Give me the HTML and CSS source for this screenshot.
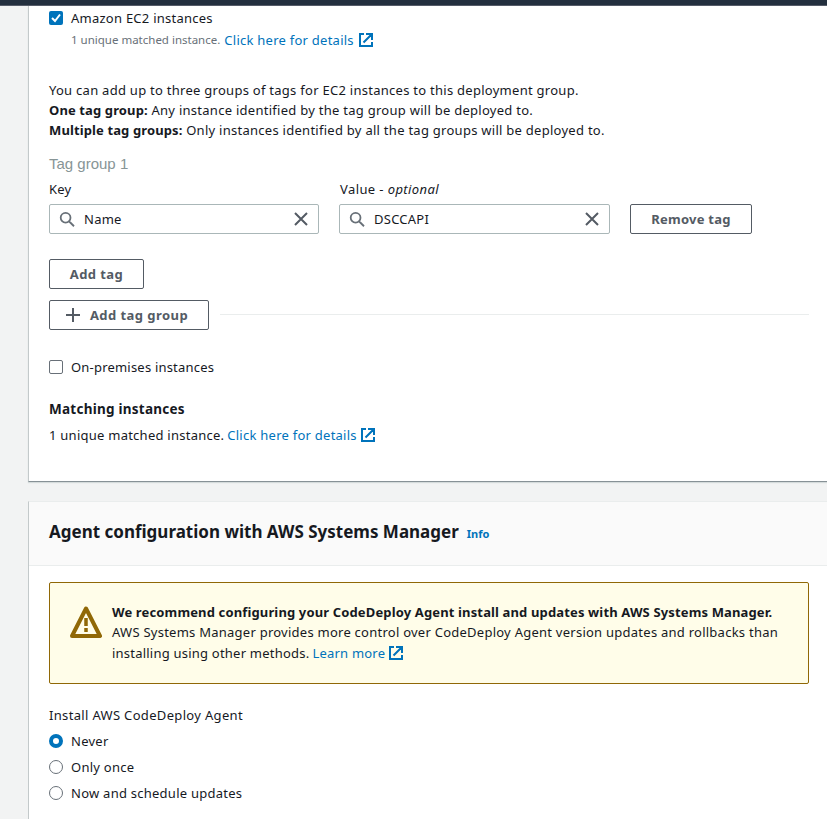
FILE: index.html
```html
<!DOCTYPE html>
<html lang="en">
<head>
<meta charset="utf-8">
<title>Edit deployment group</title>
<link rel="stylesheet" href="styles.css">
</head>
<body>
<svg class="sprite" aria-hidden="true">
  <symbol id="external" viewBox="0 0 16 16"><path d="M6 2H2v12h12v-4M8 2h6v6M14 2 5.500 10.500" fill="none" stroke="currentColor" stroke-width="2"/></symbol>
  <symbol id="search" viewBox="0 0 16 16"><path d="M11.500 6.750a4.900 4.900 0 1 1-9.800 0 4.900 4.900 0 0 1 9.800 0ZM10 10.250l5 5" fill="none" stroke="currentColor" stroke-width="1.800"/></symbol>
  <symbol id="close" viewBox="0 0 16 16"><path d="m2 2 12 12M14 2 2 14" fill="none" stroke="currentColor" stroke-width="2"/></symbol>
</svg>
<header class="topbar"></header>
<main class="page">
  <section class="panel environment">
    <div class="choice"><span class="checkbox checked"><svg viewBox="0 0 14 14"><path d="m3 7 3 3 5-6.500" fill="none" stroke="#fff" stroke-width="2"/></svg></span><span>Amazon EC2 instances</span></div>
    <div class="description"><small>1 unique matched instance.</small> <a>Click here for details</a><svg class="ext"><use href="#external"/></svg></div>
    <div class="intro">
      <p>You can add up to three groups of tags for EC2 instances to this deployment group.</p>
      <p><b>One tag group:</b> Any instance identified by the tag group will be deployed to.</p>
      <p><b>Multiple tag groups:</b> Only instances identified by all the tag groups will be deployed to.</p>
    </div>
    <div class="group-title">Tag group 1</div>
    <div class="fields">
      <div class="field key"><label>Key</label><div class="input"><svg class="glass"><use href="#search"/></svg><span>Name</span><svg class="clear"><use href="#close"/></svg></div></div>
      <div class="field value"><label>Value - <i>optional</i></label><div class="input"><svg class="glass"><use href="#search"/></svg><span>DSCCAPI</span><svg class="clear"><use href="#close"/></svg></div></div>
      <button class="button remove">Remove tag</button>
    </div>
    <button class="button add">Add tag</button>
    <div class="group-row">
      <button class="button add-group"><svg viewBox="0 0 14 14"><path d="M7 0v14M0 7h14" stroke="currentColor" stroke-width="2"/></svg>Add tag group</button>
      <span class="rule"></span>
    </div>
    <div class="choice onprem"><span class="checkbox"></span><span>On-premises instances</span></div>
    <h3>Matching instances</h3>
    <div class="matching"><span>1 unique matched instance.</span> <a>Click here for details</a><svg class="ext"><use href="#external"/></svg></div>
  </section>
  <section class="panel agent">
    <div class="panel-header"><h2>Agent configuration with AWS Systems Manager</h2><a class="info">Info</a></div>
    <div class="panel-body">
      <div class="alert">
        <svg class="warning" viewBox="0 0 32 32"><path d="M16 2.500 30 30H2Z" fill="none" stroke="currentColor" stroke-width="4" stroke-linejoin="round"/><path d="M16 12v8M16 22v4" stroke="currentColor" stroke-width="3.500"/></svg>
        <div class="alert-text">
          <p class="alert-title"><b>We recommend configuring your CodeDeploy Agent install and updates with AWS Systems Manager.</b></p>
          <p>AWS Systems Manager provides more control over CodeDeploy Agent version updates and rollbacks than</p>
          <p class="alert-last"><span>installing using other methods.</span> <a>Learn more</a><svg class="ext"><use href="#external"/></svg></p>
        </div>
      </div>
      <div class="install-label">Install AWS CodeDeploy Agent</div>
      <div class="choice"><span class="radio on"></span><span>Never</span></div>
      <div class="choice"><span class="radio"></span><span>Only once</span></div>
      <div class="choice"><span class="radio"></span><span>Now and schedule updates</span></div>
    </div>
  </section>
</main>
</body>
</html>
```
FILE: styles.css
```css
* { box-sizing: border-box; }
body { margin: 0; height: 819px; overflow: hidden; background: #f2f3f3; color: #16191f; font: 13px/20px "Noto Sans", sans-serif; letter-spacing: .25px; }
h2, h3, p { margin: 0; }
a { color: #0073bb; }
svg { flex: none; }
.sprite { display: none; }
.topbar { height: 6px; background: #232f3e; border-bottom: 1px solid #555b68; }
.page { width: 801px; margin-left: 28px; }
.panel { border-left: 1px solid #c3c9ca; background: #fff; white-space: nowrap; }
.environment { height: 476px; padding: 2px 20px 0; border-bottom: 1px solid #879196; box-shadow: 0 1px 1px #d5dbdb; }
.choice { display: flex; align-items: center; height: 20px; gap: 8px; }
.checkbox { width: 14px; height: 14px; border: 1px solid #687078; border-radius: 2px; }
.checked { border: 0; background: #0073bb; }
.checked svg { display: block; width: 14px; height: 14px; }
.description { display: flex; align-items: center; height: 20px; margin: 2px 0 0 22px; gap: 4px; }
small { font-size: 11.500px; color: #687078; letter-spacing: 0; }
.ext { width: 16px; height: 16px; color: #0073bb; }
.intro { margin-top: 30px; }
.intro p { letter-spacing: .27px; }
.intro b { letter-spacing: .12px; }
.group-title { margin-top: 13px; height: 21px; font: 15px/21px "Liberation Sans", sans-serif; letter-spacing: 0; color: #879596; }
.fields { display: flex; align-items: flex-end; gap: 20px; margin-top: 5px; }
.field { width: 270px; }
.value { width: 271px; }
.field label { display: block; margin-bottom: 5px; }
.value label { padding-left: 1px; letter-spacing: .4px; }
.input { height: 30px; display: flex; align-items: center; padding: 0 9px; border: 1px solid #aab7b8; border-radius: 2px; }
.glass { width: 16px; height: 16px; color: #687078; margin-right: 9px; }
.clear { width: 16px; height: 16px; color: #545b64; margin-left: auto; }
.button { height: 30px; display: flex; align-items: center; justify-content: center; padding: 0; border: 1px solid #545b64; border-radius: 2px; background: #fff; color: #545b64; font: bold 13px/20px "Noto Sans", sans-serif; letter-spacing: .25px; white-space: nowrap; }
.remove { width: 122px; }
.add { width: 95px; margin-top: 25px; letter-spacing: .4px; }
.group-row { display: flex; align-items: center; gap: 11px; margin-top: 11px; }
.add-group { width: 160px; gap: 10px; padding-right: 4px; letter-spacing: .45px; }
.add-group svg { width: 14px; height: 14px; }
.rule { flex: 1; height: 1px; margin-bottom: 2px; background: #eaeded; }
.onprem { margin-top: 27px; letter-spacing: .2px; }
h3 { margin-top: 22px; font-size: 13.500px; line-height: 20px; }
.matching { display: flex; align-items: center; gap: 3px; height: 20px; margin-top: 6px; }
.agent { margin-top: 19px; height: 330px; border-top: 1px solid #eaeded; }
.panel-header { height: 64px; padding: 0 20px 3px; display: flex; align-items: center; gap: 8px; background: #fafafa; border-bottom: 1px solid #eaeded; }
h2 { font-size: 17px; line-height: 22px; letter-spacing: 0; }
.info { font-size: 11px; font-weight: bold; padding-top: 4px; letter-spacing: 0; }
.panel-body { padding: 16px 20px 0; }
.alert { display: flex; width: 760px; height: 102px; padding: 19px 20px 0; border: 1px solid #906806; border-radius: 2px; background: #fffde9; }
.warning { width: 32px; height: 32px; margin: 4px 10px 0 0; color: #906806; }
.alert-title { letter-spacing: .14px; }
.alert-last { display: flex; align-items: center; gap: 3px; height: 21px; letter-spacing: .22px; }
.install-label { margin: 21px 0 6px; letter-spacing: .33px; }
.panel-body .choice { margin-bottom: 6px; }
.radio { width: 14px; height: 14px; border: 1px solid #687078; border-radius: 50%; }
.on { border: 4px solid #0073bb; }
```
